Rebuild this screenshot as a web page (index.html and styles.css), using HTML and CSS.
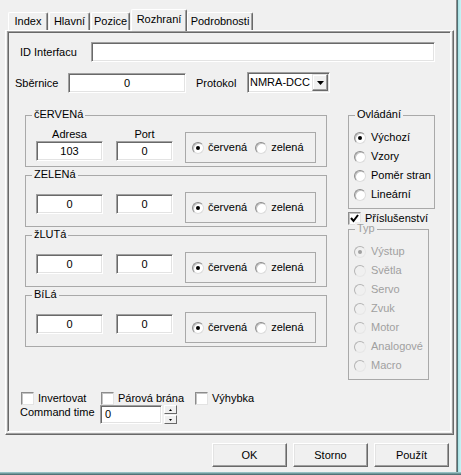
FILE: index.html
```html
<!DOCTYPE html>
<html lang="cs">
<head>
<meta charset="utf-8">
<title>Rozhraní</title>
<link rel="stylesheet" href="styles.css">
</head>
<body>
<div class="screen">
  <div class="dialog">
    <div class="tabs">
      <div class="tab t1">Index</div>
      <div class="tab t2">Hlavní</div>
      <div class="tab t3">Pozice</div>
      <div class="tab t4 sel">Rozhraní</div>
      <div class="tab t5">Podrobnosti</div>
    </div>
    <div class="pane">
      <div class="inner">
        <div class="r-id">
          <span class="lbl-id">ID Interfacu</span>
          <div class="field f-id"></div>
        </div>
        <div class="r-bus">
          <span class="lbl-bus">Sběrnice</span>
          <div class="field num f-bus">0</div>
          <span class="lbl-proto">Protokol</span>
          <div class="field select">
            <span class="sel-text">NMRA-DCC</span>
            <div class="drop"><svg width="7" height="4" viewBox="0 0 7 4"><polygon points="0,0 7,0 3.5,4" fill="#000"/></svg></div>
          </div>
        </div>
        <div class="main">
          <div class="left">
            <div class="group cgroup">
              <span class="cap">čERVENá</span>
              <div class="col c1 lab"><div class="colhead">Adresa</div><div class="field num gin">103</div></div>
              <div class="col c2 lab"><div class="colhead">Port</div><div class="field num gin">0</div></div>
              <div class="rbox">
                <span class="radio on"></span><span class="rtext">červená</span>
                <span class="radio r2"></span><span class="rtext">zelená</span>
              </div>
            </div>
            <div class="group cgroup">
              <span class="cap">ZELENá</span>
              <div class="col c1"><div class="field num gin">0</div></div>
              <div class="col c2"><div class="field num gin">0</div></div>
              <div class="rbox">
                <span class="radio on"></span><span class="rtext">červená</span>
                <span class="radio r2"></span><span class="rtext">zelená</span>
              </div>
            </div>
            <div class="group cgroup">
              <span class="cap">žLUTá</span>
              <div class="col c1"><div class="field num gin">0</div></div>
              <div class="col c2"><div class="field num gin">0</div></div>
              <div class="rbox">
                <span class="radio on"></span><span class="rtext">červená</span>
                <span class="radio r2"></span><span class="rtext">zelená</span>
              </div>
            </div>
            <div class="group cgroup">
              <span class="cap">BíLá</span>
              <div class="col c1"><div class="field num gin">0</div></div>
              <div class="col c2"><div class="field num gin">0</div></div>
              <div class="rbox">
                <span class="radio on"></span><span class="rtext">červená</span>
                <span class="radio r2"></span><span class="rtext">zelená</span>
              </div>
            </div>
          </div>
          <div class="right">
            <div class="group ovl">
              <span class="cap">Ovládání</span>
              <div class="rrow"><span class="radio on"></span><span class="rlabel">Výchozí</span></div>
              <div class="rrow"><span class="radio"></span><span class="rlabel">Vzory</span></div>
              <div class="rrow"><span class="radio"></span><span class="rlabel">Poměr stran</span></div>
              <div class="rrow"><span class="radio"></span><span class="rlabel">Lineární</span></div>
            </div>
            <div class="pcheck">
              <span class="check"><svg width="11" height="11" viewBox="0 0 11 11"><polyline points="2,5 4.5,8 9,2" fill="none" stroke="#000" stroke-width="2"/></svg></span>
              <span class="clabel">Příslušenství</span>
            </div>
            <div class="group typ">
              <span class="cap">Typ</span>
              <div class="rrow"><span class="radio dis on"></span><span class="rlabel">Výstup</span></div>
              <div class="rrow"><span class="radio dis"></span><span class="rlabel">Světla</span></div>
              <div class="rrow"><span class="radio dis"></span><span class="rlabel">Servo</span></div>
              <div class="rrow"><span class="radio dis"></span><span class="rlabel">Zvuk</span></div>
              <div class="rrow"><span class="radio dis"></span><span class="rlabel">Motor</span></div>
              <div class="rrow"><span class="radio dis"></span><span class="rlabel">Analogové</span></div>
              <div class="rrow"><span class="radio dis"></span><span class="rlabel">Macro</span></div>
            </div>
          </div>
        </div>
        <div class="checks">
          <div class="ci ci1"><span class="check"></span><span class="clabel">Invertovat</span></div>
          <div class="ci ci2"><span class="check"></span><span class="clabel">Párová brána</span></div>
          <div class="ci"><span class="check"></span><span class="clabel">Výhybka</span></div>
        </div>
        <div class="cmd">
          <span class="lbl-cmd">Command time</span>
          <div class="field f-cmd">0</div>
          <div class="spin">
            <div class="sbtn"><svg width="3" height="2" viewBox="0 0 3 2"><polygon points="1.5,0 3,2 0,2" fill="#000"/></svg></div>
            <div class="sbtn"><svg width="3" height="2" viewBox="0 0 3 2"><polygon points="0,0 3,0 1.5,2" fill="#000"/></svg></div>
          </div>
        </div>
      </div>
    </div>
    <div class="buttons">
      <div class="btn">OK</div>
      <div class="btn">Storno</div>
      <div class="btn">Použít</div>
    </div>
  </div>
  <div class="rframe"></div>
</div>
<div class="bframe"></div>
</body>
</html>
```
FILE: styles.css
```css
* { box-sizing: border-box; }
html, body { margin: 0; padding: 0; }
body {
  width: 461px;
  height: 475px;
  overflow: hidden;
  background: #f0f0f0;
  font-family: "Liberation Sans", Arial, sans-serif;
  font-size: 11px;
  line-height: 13px;
  color: #000;
}
.screen { display: flex; height: 472px; }
.dialog {
  width: 456px;
  background: #f0f0f0;
  display: flex;
  flex-direction: column;
}
.rframe {
  width: 5px;
  background: linear-gradient(to right, #8c8c8c 0, #8c8c8c 1px, #4d6f73 1px, #4d6f73 2px, #a9dfe2 2px, #c8f6f8 5px);
}
.bframe {
  height: 3px;
  background: linear-gradient(to bottom, #a7d3d6, #3f5f63);
}

/* tabs */
.tabs {
  display: flex;
  align-items: flex-end;
  height: 30px;
  padding-left: 8px;
  position: relative;
  z-index: 2;
}
.tab {
  height: 18px;
  border-top: 1px solid #fff;
  border-left: 1px solid #fff;
  border-right: 1px solid #696969;
  box-shadow: inset -1px 0 #a0a0a0;
  background: #f0f0f0;
  text-align: center;
  line-height: 16px;
  border-radius: 2px 2px 0 0;
}
.t1 { width: 40px; }
.t2 { width: 41px; margin-left: 1px; }
.t3 { width: 39px; margin-left: 1px; }
.t4 { width: 56px; margin-left: 1px; }
.t5 { width: 66px; }
.sel {
  height: 22px;
  margin-bottom: -1px;
  padding-top: 1px;
}

/* pane */
.pane {
  margin-left: 5px;
  width: 449px;
  height: 405px;
  border: 1px solid;
  border-color: #fff #696969 #696969 #fff;
  box-shadow: inset -1px -1px #a0a0a0;
  padding: 0 2px 2px 1px;
}
.inner {
  height: 100%;
  border: 1px solid;
  border-color: #a0a0a0 #fff #fff #a0a0a0;
  box-shadow: inset 1px 1px #696969;
}

.field {
  background: #fff;
  border: 1px solid;
  border-color: #a0a0a0 #fff #fff #a0a0a0;
  box-shadow: inset 1px 1px #696969, inset -1px -1px #e3e3e3;
}
.num {
  display: flex;
  align-items: center;
  justify-content: center;
}

.r-id {
  display: flex;
  align-items: center;
  margin-top: 10px;
  padding-left: 12px;
}
.lbl-id { width: 71px; }
.f-id { width: 344px; height: 20px; }

.r-bus {
  display: flex;
  align-items: center;
  margin-top: 11px;
  padding-left: 7px;
  height: 20px;
}
.lbl-bus { width: 53px; }
.f-bus { width: 118px; height: 20px; }
.lbl-proto { margin-left: 10px; width: 51px; }
.select {
  width: 83px;
  height: 21px;
  margin-top: -1px;
  display: flex;
  align-items: center;
  padding-left: 2px;
}
.sel-text { flex: 1; }
.drop {
  width: 16px;
  height: 17px;
  margin-right: 1px;
  background: #f0f0f0;
  border: 1px solid;
  border-color: #e3e3e3 #696969 #696969 #e3e3e3;
  box-shadow: inset -1px -1px #a0a0a0, inset 1px 1px #fff;
  display: flex;
  align-items: center;
  justify-content: center;
}
.drop svg { display: block; }

/* main */
.main {
  display: flex;
  align-items: flex-start;
  margin-top: 22px;
  padding-left: 17px;
}
.left {
  width: 302px;
  display: flex;
  flex-direction: column;
  gap: 8px;
}
.group {
  position: relative;
  border: 1px solid #a9a9a9;
}
.cap {
  position: absolute;
  top: -8px;
  left: 6px;
  padding: 0 2px;
  background: #f0f0f0;
  line-height: 13px;
}
.cgroup {
  height: 52px;
  display: flex;
  align-items: flex-start;
  padding-left: 10px;
}
.col { margin-top: 18px; }
.col.lab { margin-top: 12px; }
.c1 { width: 67px; }
.c2 { width: 57px; margin-left: 13px; }
.colhead { text-align: center; height: 13px; }
.gin { height: 20px; }
.rbox {
  width: 131px;
  height: 31px;
  margin-left: 12px;
  margin-top: 16px;
  border: 1px solid #a9a9a9;
  display: flex;
  align-items: center;
  padding-left: 6px;
}
.rtext { margin-left: 4px; }
.r2 { margin-left: 8px; }

.radio {
  position: relative;
  flex: none;
  width: 12px;
  height: 12px;
  border-radius: 50%;
  background: #fff;
  border: 1px solid;
  border-color: #8c8c8c #dcdcdc #dcdcdc #8c8c8c;
  box-shadow: inset 1px 1px 0 #c4c4c4;
}
.radio.on::after {
  content: "";
  position: absolute;
  left: 3px;
  top: 3px;
  width: 4px;
  height: 4px;
  border-radius: 50%;
  background: #000;
}
.radio.dis {
  background: #f0f0f0;
  border-color: #b4b4b4 #e6e6e6 #e6e6e6 #b4b4b4;
  box-shadow: none;
}
.radio.dis.on::after { background: #a0a0a0; }

.right { margin-left: 21px; width: 87px; }
.ovl {
  width: 87px;
  height: 94px;
  padding-top: 12px;
  padding-left: 5px;
}
.rrow {
  height: 19px;
  display: flex;
  align-items: center;
}
.rlabel { margin-left: 5px; }
.pcheck {
  margin-top: 3px;
  height: 13px;
  display: flex;
  align-items: center;
}
.check {
  flex: none;
  width: 13px;
  height: 13px;
  background: #fff;
  border: 1px solid;
  border-color: #8c8c8c #e3e3e3 #e3e3e3 #8c8c8c;
  box-shadow: inset 1px 1px #c4c4c4;
  display: flex;
  align-items: center;
  justify-content: center;
}
.check svg { display: block; }
.clabel { margin-left: 4px; }
.typ {
  margin-top: 4px;
  width: 81px;
  height: 151px;
  padding-top: 12px;
  padding-left: 5px;
  color: #a0a0a0;
}

/* bottom of pane */
.checks {
  display: flex;
  align-items: center;
  height: 13px;
  margin-top: 12px;
  padding-left: 13px;
}
.ci { display: flex; align-items: center; }
.ci1 { width: 80px; }
.ci2 { width: 94px; }
.cmd {
  display: flex;
  align-items: flex-start;
  padding-left: 12px;
}
.lbl-cmd { width: 80px; margin-top: 1px; }
.f-cmd {
  width: 62px;
  height: 19px;
  padding-left: 4px;
  display: flex;
  align-items: center;
}
.spin {
  margin-left: 2px;
  width: 13px;
  height: 19px;
  display: flex;
  flex-direction: column;
  gap: 1px;
}
.sbtn {
  flex: 1;
  background: #f0f0f0;
  border: 1px solid;
  border-color: #fff #696969 #696969 #fff;
  display: flex;
  align-items: center;
  justify-content: center;
}
.sbtn svg { display: block; }

/* buttons */
.buttons {
  display: flex;
  justify-content: flex-end;
  gap: 6px;
  padding-right: 7px;
  margin-top: 8px;
}
.btn {
  width: 75px;
  height: 24px;
  border: 1px solid;
  border-color: #fff #696969 #696969 #fff;
  box-shadow: inset -1px -1px #a0a0a0, inset 1px 1px #e3e3e3;
  background: #f0f0f0;
  display: flex;
  align-items: center;
  justify-content: center;
}
```
